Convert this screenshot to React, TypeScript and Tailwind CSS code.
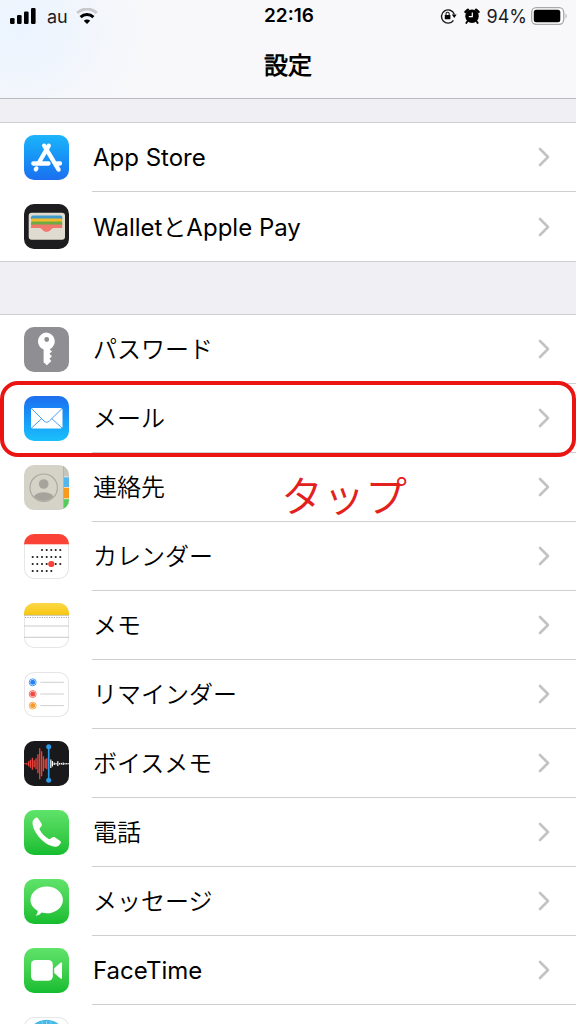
import type { ReactNode } from "react";

function Tile({ className, children }: { className: string; children?: ReactNode }) {
  return (
    <span className={`flex size-[45px] shrink-0 items-center justify-center overflow-hidden rounded-[10px] ${className}`}>
      {children}
    </span>
  );
}

function Art({ children }: { children: ReactNode }) {
  return (
    <svg viewBox="0 0 45 45" className="size-[45px] shrink-0" aria-hidden="true">
      {children}
    </svg>
  );
}

const green = "bg-linear-to-b from-[#5fe36a] to-[#12bd2e]";
const outlined = "bg-white shadow-[inset_0_0_0_1px_#e6e6e8]";

function AppStoreIcon() {
  return (
    <Tile className="bg-linear-to-b from-[#1eb4fa] to-[#1c6ff0]">
      <Art>
        <g stroke="#fff" strokeWidth="4.300" strokeLinecap="round" fill="none">
          <path d="M20.200 10.700 34.600 34.600" />
          <path d="M24.800 10.700 15 27.500" />
          <path d="M9.300 28.500H24.500M33 28.500H36" />
          <path d="M12.400 33.400 11.800 34.400" />
        </g>
      </Art>
    </Tile>
  );
}

function WalletIcon() {
  return (
    <Tile className="bg-[#1d1d1f]">
      <Art>
        <rect x="4.700" y="8.700" width="36.300" height="27" rx="3" fill="#dfdbd0" />
        <path d="M7 15v-1.500a2 2 0 0 1 2-2h27.300a2 2 0 0 1 2 2V15z" fill="#3f9cca" />
        <path d="M7 18v-2a1.500 1.500 0 0 1 1.500-1.500h28.300a1.500 1.500 0 0 1 1.500 1.500v2z" fill="#f4b828" />
        <path d="M7 21v-2a1.500 1.500 0 0 1 1.500-1.500h28.300a1.500 1.500 0 0 1 1.500 1.500v2z" fill="#6fab45" />
        <path d="M7 24v-2a1.500 1.500 0 0 1 1.500-1.500h28.300a1.500 1.500 0 0 1 1.500 1.500v2h-8.300c-1.500 0-2.200.6-3 1.500-1.200 1.400-2.400 2.300-4.400 2.300s-3.200-.9-4.400-2.300c-.8-.9-1.500-1.500-3-1.500z" fill="#f0786c" />
      </Art>
    </Tile>
  );
}

function KeyIcon() {
  return (
    <Tile className="bg-[#8e8e93]">
      <Art>
        <path
          fillRule="evenodd"
          fill="#fff"
          d="M22.500 5.500a8.800 8.800 0 0 0-2.900 17v12.800l3.300 3 4.500-4.300-2-2.300 2.600-2.400-2.600-2.500 2.600-2.200-2.400-2.300a8.800 8.800 0 0 0-3.100-16.800zm.2 4.600a2.400 2.400 0 1 1 0 4.800 2.400 2.400 0 0 1 0-4.800z"
        />
      </Art>
    </Tile>
  );
}

function MailIcon() {
  return (
    <Tile className="bg-linear-to-b from-[#1f6df0] to-[#1dc0fc]">
      <Art>
        <rect x="7" y="12" width="31.500" height="20.500" rx="1.800" fill="#fff" />
        <g fill="none" stroke="#4a9cf0" strokeWidth="1">
          <path d="M7.500 12.500 20 25c1.600 1.600 3.800 1.600 5.400 0L38 12.500" />
          <path d="M7.500 32 17.800 22.500M38 32 27.700 22.500" />
        </g>
      </Art>
    </Tile>
  );
}

function ContactsIcon() {
  return (
    <Tile className="bg-[#d5d3c8]">
      <Art>
        <clipPath id="contact-face">
          <circle cx="19.700" cy="22.700" r="13" />
        </clipPath>
        <circle cx="19.700" cy="22.700" r="13.700" fill="none" stroke="#aaa89f" strokeWidth="1.100" />
        <circle cx="19.700" cy="19" r="4.800" fill="#a5a39b" />
        <ellipse cx="19.700" cy="34.500" rx="11" ry="7.300" fill="#a5a39b" clipPath="url(#contact-face)" />
        <rect x="39" width="6" height="45" fill="#efeee8" />
        <rect x="39" width="1" height="45" fill="#b6b4aa" />
        <rect x="40" width="5" height="11.500" fill="#c5c4bc" />
        <rect x="40" y="12.300" width="5" height="9.700" fill="#55b6ee" />
        <rect x="40" y="22.800" width="5" height="10.500" fill="#f79a1d" />
        <rect x="40" y="34.200" width="5" height="10.800" fill="#53cc5a" />
      </Art>
    </Tile>
  );
}

const calendarColumns = [8.7, 13.3, 18, 22.7, 27.3, 31.7, 36.3];
const calendarWeeks = [
  { y: 16, days: calendarColumns.slice(2) },
  { y: 23, days: calendarColumns },
  { y: 30, days: calendarColumns },
  { y: 37, days: calendarColumns.slice(0, 5) },
];

function CalendarIcon() {
  return (
    <Tile className={outlined}>
      <Art>
        <rect width="45" height="10.300" fill="#fb4236" />
        {calendarWeeks.map((week) =>
          week.days.map((x) => <circle key={`${week.y}-${x}`} cx={x} cy={week.y} r="1.050" fill="#1c1c1e" />),
        )}
        <circle cx="27.300" cy="30" r="3.100" fill="#f9423a" />
      </Art>
    </Tile>
  );
}

function NotesIcon() {
  return (
    <Tile className={outlined}>
      <Art>
        <linearGradient id="notes-top" x1="0" y1="0" x2="0" y2="1">
          <stop offset="0" stopColor="#fbd84a" />
          <stop offset="1" stopColor="#fac70f" />
        </linearGradient>
        <rect width="45" height="12" fill="url(#notes-top)" />
        <path d="M0 12.300h45" stroke="#b8ae8c" strokeWidth="0.800" />
        <path d="M1 14.500h44" stroke="#aaa" strokeWidth="1.200" strokeDasharray="1.200 1.200" />
        <path d="M0 23h45M0 34.300h45" stroke="#c4c4c6" strokeWidth="0.900" />
      </Art>
    </Tile>
  );
}

const reminders = [
  { y: 10.3, color: "#2482f2" },
  { y: 22, color: "#f04a43" },
  { y: 33.6, color: "#f79a2c" },
];

function RemindersIcon() {
  return (
    <Tile className={outlined}>
      <Art>
        {reminders.map(({ y, color }) => (
          <g key={y}>
            <circle cx="8.700" cy={y} r="3.500" fill="none" stroke={color} strokeWidth="0.800" />
            <circle cx="8.700" cy={y} r="2.500" fill={color} />
            <path d={`M16.300 ${y}h23.500`} stroke="#c9c9cb" strokeWidth="0.900" />
          </g>
        ))}
      </Art>
    </Tile>
  );
}

const playedBars = [
  [1, 0.6], [2.8, 1], [4.7, 2.5], [6.5, 4], [8.4, 6], [10.2, 3.5], [12, 5.5],
  [13.9, 9.5], [15.7, 15.5], [17.6, 12.5], [19.4, 7.5], [21.2, 4.5], [22.8, 5.5],
];
const restBars = [
  [26.8, 4.3], [28.4, 2.8], [30.2, 1.3], [32, 0.8], [33.8, 2.4], [35.6, 0.8],
  [37.4, 0.8], [39.2, 1.3], [41, 0.8], [42.8, 0.8], [44.4, 0.5],
];

function VoiceMemosIcon() {
  return (
    <Tile className="bg-[#19191b]">
      <Art>
        <g stroke="#e5423c" strokeWidth="1.350">
          {playedBars.map(([x, h]) => <path key={x} d={`M${x} ${22.7 - h}V${22.7 + h}`} />)}
        </g>
        <g stroke="#fff" strokeWidth="1.200">
          {restBars.map(([x, h]) => <path key={x} d={`M${x} ${22.7 - h}V${22.7 + h}`} />)}
        </g>
        <path d="M24.700 5.700V39.300" stroke="#2a9be8" strokeWidth="1.600" />
        <circle cx="24.700" cy="5.700" r="2.500" fill="#2a9be8" />
        <circle cx="24.700" cy="39.300" r="2.500" fill="#2a9be8" />
      </Art>
    </Tile>
  );
}

function PhoneIcon() {
  return (
    <Tile className={green}>
      <Art>
        <path
          fill="#fff"
          d="M8.500 12.500c0-2 1.300-3.600 3-4.600 1-.6 2-.4 2.700.6l3.300 5c.6 1 .4 2-.3 2.900l-1.300 1.500c-.5.700-.5 1.300-.1 2.100 1.800 3.300 5.300 6.900 8.600 8.800.8.400 1.500.4 2.100-.1l1.500-1.200c.9-.7 1.900-.8 2.900-.2l5 3.400c1 .7 1.200 1.700.6 2.700-1 1.700-2.700 3.300-5 3.300C22 36.700 8.500 23 8.500 12.500z"
        />
      </Art>
    </Tile>
  );
}

function MessagesIcon() {
  return (
    <Tile className={green}>
      <Art>
        <path
          fill="#fff"
          d="M22.700 7.500c9 0 16.200 6 16.200 13.400s-7.200 13.400-16.200 13.400c-1.800 0-3.500-.2-5-.7-1.600 1.700-3.400 2.900-6.100 3.300 1.300-1.500 2.100-3.200 2.100-5.200-4.400-2.400-7.200-6.300-7.200-10.800C6.500 13.500 13.700 7.500 22.700 7.500z"
        />
      </Art>
    </Tile>
  );
}

function FaceTimeIcon() {
  return (
    <Tile className={green}>
      <Art>
        <rect x="7" y="12" width="21.800" height="20.700" rx="4.500" fill="#fff" />
        <path d="M30.200 20.200 36.500 14.700c.7-.6 1.500-.3 1.500.6v14.600c0 .9-.8 1.200-1.500.6l-6.300-5.500z" fill="#fff" />
      </Art>
    </Tile>
  );
}

function SafariIcon() {
  return (
    <Tile className={outlined}>
      <Art>
        <circle cx="22.500" cy="22.500" r="19.700" fill="#45b9e8" />
        <path d="M22.500 4v3M18 4.500l.5 2M27 4.500l-.5 2" stroke="#d4effa" strokeWidth="0.500" />
        <path d="m35 10-10 15-5-5z" fill="#f0483e" />
        <path d="m10 35 10-15 5 5z" fill="#fff" />
      </Art>
    </Tile>
  );
}

function Chevron() {
  return (
    <svg viewBox="0 0 12 20" className="mr-[26px] h-5 w-3 shrink-0" aria-hidden="true">
      <path d="M2 2l8 8-8 8" fill="none" stroke="#c3c3c6" strokeWidth="2.600" strokeLinecap="round" strokeLinejoin="round" />
    </svg>
  );
}

function Row({ icon, label, last, children }: { icon: ReactNode; label: string; last?: boolean; children?: ReactNode }) {
  return (
    <li className="relative">
      <a href="#" className="flex h-[69px] items-stretch bg-white pl-6">
        <span className="flex items-center">{icon}</span>
        <span
          className={`ml-[23px] flex grow items-center justify-between pl-px ${last ? "" : "border-b border-[#cfcfd2]"}`}
        >
          <span className="pt-0.5 text-2xl text-black">{label}</span>
          <Chevron />
        </span>
      </a>
      {children}
    </li>
  );
}

function StatusBar() {
  return (
    <div className="grid h-8 grid-cols-3 items-center pr-2 pl-2.5 text-[18px] text-[#1c1c1e]">
      <div className="flex items-center">
        <svg viewBox="0 0 26 16" className="h-4 w-[26px]" aria-hidden="true">
          <rect x="0" y="10" width="4.600" height="6" rx="1.200" />
          <rect x="7" y="7" width="4.600" height="9" rx="1.200" />
          <rect x="14" y="3.500" width="4.600" height="12.500" rx="1.200" />
          <rect x="21" y="0" width="4.600" height="16" rx="1.200" />
        </svg>
        <span className="ml-[11px]">au</span>
        <svg viewBox="0 0 22 16" className="ml-2 h-4 w-[22px]" aria-hidden="true">
          <path d="M1.200 5a14.200 14.200 0 0 1 19.600 0" fill="none" stroke="#c8c9cb" strokeWidth="3" />
          <path d="M4.600 9.200a9.200 9.200 0 0 1 12.800 0" fill="none" stroke="#000" strokeWidth="3" />
          <path d="M11 16l-3.200-3.300a4.600 4.600 0 0 1 6.400 0z" />
        </svg>
      </div>
      <span className="text-center text-[19px] font-semibold text-black">22:16</span>
      <div className="flex items-center justify-end">
        <svg viewBox="0 0 17 16" className="h-4 w-[17px]" aria-hidden="true">
          <path d="M13.500 12.300A6.600 6.600 0 1 1 14.300 6.200" fill="none" stroke="#1c1c1e" strokeWidth="1.400" />
          <path d="M11.800 6.500h4.800L14.300 10z" />
          <rect x="4.800" y="7" width="5.600" height="4.300" rx=".6" />
          <path d="M6 7.200V5.800a1.600 1.600 0 0 1 3.200 0v1.400" fill="none" stroke="#1c1c1e" strokeWidth="1.100" />
        </svg>
        <svg viewBox="0 0 16 16" className="ml-[7px] size-4" aria-hidden="true">
          <circle cx="8" cy="8.300" r="6.700" />
          <path d="M1.500 4 4 1.700M14.500 4 12 1.700" stroke="#000" strokeWidth="2.400" strokeLinecap="round" />
          <path d="M3.600 13 2.300 15M12.400 13l1.300 2" stroke="#000" strokeWidth="1.800" strokeLinecap="round" />
          <path d="M8.300 4.500V8.600H4.800" fill="none" stroke="#fff" strokeWidth="1.200" />
        </svg>
        <span className="ml-[7px]">94%</span>
        <svg viewBox="0 0 37 18" className="ml-1 h-[18px] w-[37px] shrink-0" aria-hidden="true">
          <rect x="0.700" y="0.700" width="32" height="16.600" rx="4.500" fill="#fff" stroke="#a9a9ab" strokeWidth="1.300" />
          <rect x="2.800" y="2.800" width="26.500" height="12.400" rx="2.500" />
          <path d="M34.500 6.500c1.500.8 1.500 4.200 0 5z" fill="#a9a9ab" />
        </svg>
      </div>
    </div>
  );
}

export default function App() {
  return (
    <div
      lang="ja"
      className="flex h-screen flex-col overflow-hidden bg-[#efeff4] font-['Inter','Noto_Sans_CJK_JP_DemiLight','Noto_Sans_CJK_JP',sans-serif]"
    >
      <header className="h-[99px] shrink-0 border-b border-[#b9b9be] bg-[#f8f8fa] bg-[radial-gradient(ellipse_130px_110px_at_20px_30px,#ebf4ff,#f8f8fa)]">
        <StatusBar />
        <h1 className="pt-[18px] text-center text-2xl font-bold text-black">設定</h1>
      </header>
      <main className="grow overflow-y-auto pt-[23px] [scrollbar-width:none]">
        <ul className="border-y border-[#cfcfd2]">
          <Row icon={<AppStoreIcon />} label="App Store" />
          <Row icon={<WalletIcon />} label="WalletとApple Pay" last />
        </ul>
        <ul className="mt-[52px] border-t border-[#cfcfd2]">
          <Row icon={<KeyIcon />} label="パスワード" />
          <Row icon={<MailIcon />} label="メール">
            <span className="pointer-events-none absolute inset-x-0 -top-[3px] z-10 h-[76px] rounded-[18px] border-4 border-[#ea1512]" />
          </Row>
          <Row icon={<ContactsIcon />} label="連絡先">
            <strong className="pointer-events-none absolute inset-x-0 top-3 z-10 ml-28 text-center text-[42px] leading-[64px] font-normal text-[#e3211c]">
              タップ
            </strong>
          </Row>
          <Row icon={<CalendarIcon />} label="カレンダー" />
          <Row icon={<NotesIcon />} label="メモ" />
          <Row icon={<RemindersIcon />} label="リマインダー" />
          <Row icon={<VoiceMemosIcon />} label="ボイスメモ" />
          <Row icon={<PhoneIcon />} label="電話" />
          <Row icon={<MessagesIcon />} label="メッセージ" />
          <Row icon={<FaceTimeIcon />} label="FaceTime" />
          <li>
            <a href="#" aria-label="Safari" className="flex h-[69px] items-center bg-white pl-6">
              <SafariIcon />
            </a>
          </li>
        </ul>
      </main>
    </div>
  );
}
